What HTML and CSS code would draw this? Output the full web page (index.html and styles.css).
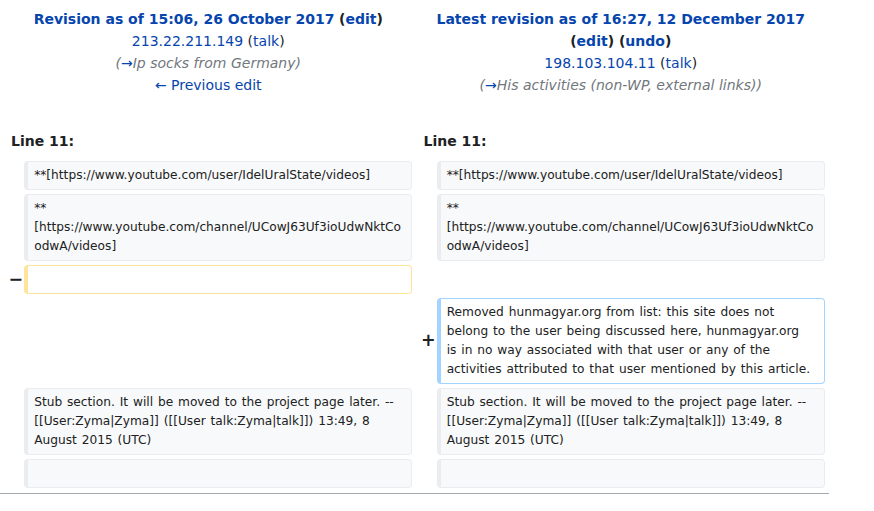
FILE: index.html
```html
<!DOCTYPE html>
<html>
<head>
<meta charset="utf-8">
<link rel="stylesheet" href="styles.css">
</head>
<body>
<div class="diff-wrap">
<table class="diff">
  <colgroup>
    <col class="col-marker">
    <col class="col-content">
    <col class="col-marker">
    <col class="col-content">
  </colgroup>
  <tbody>
    <tr class="diff-title">
      <td colspan="2" class="diff-otitle">
        <div><a class="link strong" href="#">Revision as of 15:06, 26 October 2017</a> <span class="strong">(<a class="link" href="#">edit</a>)</span></div>
        <div><a class="link" href="#">213.22.211.149</a> (<a class="link" href="#">talk</a>)</div>
        <div class="comment">(<a class="link autocomment" href="#">→</a>Ip socks from Germany)</div>
        <div><a class="link" href="#">← Previous edit</a></div>
      </td>
      <td colspan="2" class="diff-ntitle">
        <div><a class="link strong" href="#">Latest revision as of 16:27, 12 December 2017</a> <span class="strong">(<a class="link" href="#">edit</a>) (<a class="link" href="#">undo</a>)</span></div>
        <div><a class="link" href="#">198.103.104.11</a> (<a class="link" href="#">talk</a>)</div>
        <div class="comment">(<a class="link autocomment" href="#">→</a>His activities (non-WP, external links))</div>
      </td>
    </tr>
    <tr>
      <td colspan="2" class="diff-lineno">Line 11:</td>
      <td colspan="2" class="diff-lineno">Line 11:</td>
    </tr>
    <tr>
      <td class="diff-marker"></td>
      <td class="diff-context"><div>**[https://www.youtube.com/user/IdelUralState/videos]</div></td>
      <td class="diff-marker"></td>
      <td class="diff-context"><div>**[https://www.youtube.com/user/IdelUralState/videos]</div></td>
    </tr>
    <tr>
      <td class="diff-marker"></td>
      <td class="diff-context"><div>**[https://www.youtube.com/channel/UCowJ63Uf3ioUdwNktCoodwA/videos]</div></td>
      <td class="diff-marker"></td>
      <td class="diff-context"><div>**[https://www.youtube.com/channel/UCowJ63Uf3ioUdwNktCoodwA/videos]</div></td>
    </tr>
    <tr>
      <td class="diff-marker"><span class="mk">−</span></td>
      <td class="diff-deletedline"><div><br></div></td>
      <td colspan="2" class="diff-empty"></td>
    </tr>
    <tr>
      <td colspan="2" class="diff-empty"></td>
      <td class="diff-marker"><span class="mk">+</span></td>
      <td class="diff-addedline"><div>Removed hunmagyar.org from list: this site does not belong to the user being discussed here, hunmagyar.org is in no way associated with that user or any of the activities attributed to that user mentioned by this article.</div></td>
    </tr>
    <tr>
      <td class="diff-marker"></td>
      <td class="diff-context"><div>Stub section. It will be moved to the project page later. --[[User:Zyma|Zyma]] ([[User talk:Zyma|talk]]) 13:49, 8 August 2015 (UTC)</div></td>
      <td class="diff-marker"></td>
      <td class="diff-context"><div>Stub section. It will be moved to the project page later. --[[User:Zyma|Zyma]] ([[User talk:Zyma|talk]]) 13:49, 8 August 2015 (UTC)</div></td>
    </tr>
    <tr>
      <td class="diff-marker"></td>
      <td class="diff-context"><div><br></div></td>
      <td class="diff-marker"></td>
      <td class="diff-context"><div><br></div></td>
    </tr>
  </tbody>
</table>
<div class="diff-end"></div>
</div>
</body>
</html>
```

FILE: styles.css
```css
html, body {
  margin: 0;
  padding: 0;
  background: #ffffff;
}

body {
  font-family: "DejaVu Sans", sans-serif;
  font-size: 14px;
  color: #202122;
}

.diff-wrap {
  width: 829px;
}

table.diff {
  width: 829px;
  table-layout: fixed;
  border-spacing: 4px;
  border-collapse: separate;
  margin: 0;
}

.col-marker { width: 2%; }
.col-content { width: 48%; }

table.diff td {
  padding: 0.33em 0.5em;
  vertical-align: top;
}

table.diff tr.diff-title td {
  text-align: center;
  line-height: 22px;
  padding: 4px 7px 25px;
}

.link {
  color: #0645ad;
  text-decoration: none;
}

.strong {
  font-weight: bold;
}

.comment {
  font-style: italic;
  color: #72777d;
}

.comment .autocomment {
  color: #0645ad;
}

table.diff td.diff-lineno {
  font-weight: bold;
  line-height: 1.6;
}

table.diff td.diff-marker {
  text-align: right;
  font-weight: bold;
  font-size: 1.25em;
  line-height: 1.2;
  padding: 0;
  vertical-align: middle;
  overflow: visible;
}

.mk {
  display: inline-block;
  margin-right: -3px;
}

table.diff td.diff-context,
table.diff td.diff-deletedline,
table.diff td.diff-addedline {
  font-size: 12.2px;
  word-spacing: 1px;
  line-height: 19px;
  padding: 4px 8px 4px 6px;
  border-style: solid;
  border-width: 1px 1px 1px 4px;
  border-radius: 4px;
  word-wrap: break-word;
  overflow-wrap: break-word;
  vertical-align: top;
  color: #202122;
}

table.diff td.diff-context {
  background: #f8f9fa;
  border-color: #eaecf0;
}

table.diff td.diff-deletedline {
  background: #ffffff;
  border-color: #ffe49c;
}

table.diff td.diff-addedline {
  background: #ffffff;
  border-color: #a3d3ff;
  padding-right: 13px;
}

table.diff td.diff-empty {
  padding: 0;
}

.diff-end {
  margin-top: 1px;
  border-top: 1px solid #a2a9b1;
  width: 829px;
}
```
